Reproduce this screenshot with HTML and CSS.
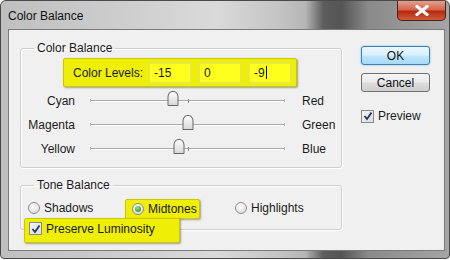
FILE: index.html
```html
<!DOCTYPE html>
<html lang="en">
<head>
    <meta charset="UTF-8">
    <title>Color Balance</title>
    <link rel="stylesheet" href="styles.css">
</head>
<body>

    <div class="window">
        <!-- Title bar -->
        <div class="titlebar">
            <span class="title">Color Balance</span>
            <span class="close">
                <svg width="14" height="11" viewBox="0 0 14 11"><path d="M2 1.5 L12 9.5 M12 1.5 L2 9.5" stroke="#fff" stroke-width="3" stroke-linecap="square"/></svg>
            </span>
        </div>

        <div class="client">
            <div class="main">
                <!-- Color Balance group -->
                <fieldset class="group balance">
                    <legend>Color Balance</legend>
                    <div class="levels hl">
                        <span class="levels-label">Color Levels:</span>
                        <span class="field">-15</span>
                        <span class="field">0</span>
                        <span class="field">-9<span class="caret"></span></span>
                    </div>

                    <div class="slider-row">
                        <span class="from">Cyan</span>
                        <div class="track"><span class="tick"></span><span class="thumb" style="left: 42.5%"></span></div>
                        <span class="to">Red</span>
                    </div>
                    <div class="slider-row">
                        <span class="from">Magenta</span>
                        <div class="track"><span class="tick"></span><span class="thumb" style="left: 50%"></span></div>
                        <span class="to">Green</span>
                    </div>
                    <div class="slider-row">
                        <span class="from">Yellow</span>
                        <div class="track"><span class="tick"></span><span class="thumb" style="left: 45.5%"></span></div>
                        <span class="to">Blue</span>
                    </div>
                </fieldset>

                <!-- Tone Balance group -->
                <fieldset class="group tone">
                    <legend>Tone Balance</legend>
                    <div class="tone-row">
                        <label class="opt shadows"><span class="radio"></span>Shadows</label>
                        <label class="opt hl midtones"><span class="radio on"></span>Midtones</label>
                        <label class="opt highlights"><span class="radio"></span>Highlights</label>
                    </div>
                    <label class="opt hl preserve"><span class="check"><svg width="10" height="10" viewBox="0 0 10 10"><path d="M1.5 5 L4 8 L8.5 1.5" fill="none" stroke="#23356e" stroke-width="1.8"/></svg></span>Preserve Luminosity</label>
                </fieldset>
            </div>

            <div class="side">
                <button class="btn default">OK</button>
                <button class="btn">Cancel</button>
                <label class="opt preview"><span class="check"><svg width="10" height="10" viewBox="0 0 10 10"><path d="M1.5 5 L4 8 L8.5 1.5" fill="none" stroke="#23356e" stroke-width="1.8"/></svg></span>Preview</label>
            </div>
        </div>
    </div>

</body>
</html>
```

FILE: styles.css
```css
body {
    margin: 0;
    background-color: #fff;
    font-family: "Liberation Sans", Arial, sans-serif;
    font-size: 12px;
    color: #1b1b1b;
}
.window {
    width: 448px;
    height: 257px;
    border: 1px solid #4a4a4a;
    border-radius: 6px 6px 4px 4px;
    background: linear-gradient(90deg, #bfbfbf 0%, #cfcfcf 30%, #dadada 48%, #c4c4c4 62%, #b5b5b5 68%, #5c5c5c 72%, #555 76%, #8a8a8a 82%, #a5a5a5 100%);
    overflow: hidden;
}
.titlebar {
    height: 28px;
    display: flex;
    justify-content: space-between;
    align-items: flex-start;
}
.title {
    margin: 8px 0 0 7px;
    font-size: 12px;
    color: #111;
}
.close {
    width: 47px;
    height: 19px;
    margin-right: 3px;
    display: flex;
    align-items: center;
    justify-content: center;
    border: 1px solid #4b2118;
    border-top: none;
    border-radius: 0 0 5px 5px;
    background: linear-gradient(#e8a08e 0%, #d5664e 45%, #b82a10 55%, #cf5a3a 100%);
}
.client {
    height: 220px;
    margin: 0 4px 0 7px;
    border: 1px solid #7a7a7a;
    background-color: #f0f0f0;
    display: flex;
}
.main {
    width: 322px;
    padding-left: 11px;
}
.group {
    margin: 11px 0 0 0;
    padding: 0;
    border: 1px solid #cfcfcf;
    border-radius: 3px;
    box-shadow: inset 1px 1px 0 #fff, 1px 1px 0 #fff;
}
.group legend {
    margin-left: 13px;
    padding: 0 3px;
    line-height: 14px;
}
.balance {
    height: 122px;
    padding-top: 3px;
}
.hl {
    background-color: #eeee06;
    border: 1px solid #c9c900;
    border-radius: 2px;
    box-shadow: 1px 1px 2px rgba(0, 0, 0, 0.35);
}
.levels {
    width: 232px;
    height: 27px;
    margin: 0 0 2px 42px;
    display: flex;
    align-items: center;
    gap: 8px;
}
.levels-label {
    flex: none;
    width: 68px;
    padding-left: 9px;
    white-space: nowrap;
}
.field {
    width: 36px;
    height: 18px;
    padding-left: 4px;
    line-height: 18px;
    background-color: #ffff1e;
    border: 1px solid #e2e27a;
    display: flex;
    align-items: center;
}
.caret {
    width: 1px;
    height: 13px;
    margin-left: 1px;
    background-color: #000;
}
.slider-row {
    height: 24px;
    display: flex;
    align-items: center;
}
.from {
    width: 54px;
    text-align: right;
}
.to {
    margin-left: 17px;
}
.track {
    position: relative;
    width: 195px;
    height: 1px;
    margin-left: 15px;
    background-color: #a9a9a9;
    border-bottom: 1px solid #fff;
}
.track::before,
.track::after {
    content: "";
    position: absolute;
    top: -1px;
    width: 1px;
    height: 3px;
    background-color: #bbb;
}
.track::before {
    left: 0;
}
.track::after {
    right: 0;
}
.tick {
    position: absolute;
    left: 50%;
    top: -1px;
    width: 1px;
    height: 4px;
    background-color: #888;
}
.thumb {
    position: absolute;
    top: -9px;
    width: 11px;
    height: 15px;
    transform: translateX(-50%);
    box-sizing: border-box;
    border: 1px solid #666;
    border-radius: 5px 5px 1px 1px / 6px 6px 1px 1px;
    background: linear-gradient(#fdfdfd, #d8d8d8);
}
.tone {
    height: 44px;
    margin-top: 10px;
    padding-top: 6px;
}
.tone-row {
    height: 20px;
    display: flex;
    align-items: center;
}
.opt {
    display: flex;
    align-items: center;
    gap: 4px;
}
.shadows {
    width: 97px;
    margin-left: 7px;
}
.midtones {
    box-sizing: border-box;
    width: 75px;
    height: 20px;
    margin-top: 2px;
    padding-left: 6px;
}
.highlights {
    margin-left: 35px;
}
.preserve {
    position: relative;
    box-sizing: border-box;
    width: 156px;
    height: 25px;
    margin: 0 0 -4px 3px;
    padding: 3px 0 0 4px;
    align-items: flex-start;
}
.radio {
    box-sizing: border-box;
    width: 12px;
    height: 12px;
    border: 1px solid #8e8e8e;
    border-radius: 50%;
    background: radial-gradient(circle at 40% 35%, #fff, #d4d4d4);
    display: flex;
    align-items: center;
    justify-content: center;
}
.radio.on::after {
    content: "";
    width: 6px;
    height: 6px;
    border-radius: 50%;
    background: radial-gradient(circle at 40% 35%, #9fe07a, #1d7a1a);
}
.check {
    box-sizing: border-box;
    width: 13px;
    height: 13px;
    border: 1px solid #8a8a8a;
    background: linear-gradient(135deg, #f4f4f4, #dcdcdc);
    display: flex;
    align-items: center;
    justify-content: center;
}
.side {
    width: 69px;
    margin-left: 19px;
    padding-top: 16px;
    display: flex;
    flex-direction: column;
}
.btn {
    height: 19px;
    margin-bottom: 8px;
    padding: 0;
    font-family: "Liberation Sans", Arial, sans-serif;
    font-size: 12px;
    color: #111;
    border: 1px solid #707070;
    border-radius: 3px;
    background: linear-gradient(#f4f4f4 0%, #ebebeb 48%, #dcdcdc 52%, #d0d0d0 100%);
}
.btn.default {
    border-color: #3c7fb1;
    background: linear-gradient(#eaf6fd 0%, #d9f0fc 48%, #bee6fd 52%, #a7d9f5 100%);
    box-shadow: 0 0 2px #66b4e4;
}
.preview {
    margin-top: 9px;
}
```
